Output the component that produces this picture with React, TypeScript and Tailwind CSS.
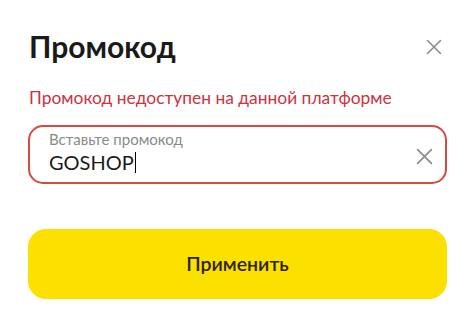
import React from 'react';

const CloseIcon: React.FC<{ size: number; className?: string }> = ({ size, className }) => (
  <svg width={size} height={size} viewBox="0 0 16 16" fill="none" className={className}>
    <path d="M1.5 1.5L14.5 14.5M14.5 1.5L1.5 14.5" stroke="currentColor" strokeWidth="1.6" strokeLinecap="round" />
  </svg>
);

export default function App() {
  return (
    <div className="w-[471px] h-[321px] bg-white px-[28px] pt-[28px] font-['Lato','Noto_Sans',sans-serif]">
      {/* Header */}
      <div className="flex items-center justify-between">
        <h1 className="text-[30px] leading-[36px] font-bold text-[#1a1a1a] pl-px">Промокод</h1>
        <button className="text-[#8c8c8c] mr-[1px] mt-[2px]">
          <CloseIcon size={16} />
        </button>
      </div>

      {/* Error */}
      <p className="mt-[24px] text-[17.4px] leading-[20px] text-[#cc3341] pl-px">
        Промокод недоступен на данной платформе
      </p>

      {/* Input */}
      <div className="mt-[17px] h-[59px] w-[419px] rounded-[15px] border-2 border-[#d9493f] flex items-start pl-[19px] pr-[12px] pt-[3px]">
        <div className="flex-1 flex flex-col">
          <span className="text-[15px] leading-[18px] text-[#8a8a8a]">Вставьте промокод</span>
          <span className="mt-[2px] text-[20px] leading-[24px] text-[#1a1a1a] flex items-center">
            GOSHOP<span className="inline-block w-px h-[21px] bg-black ml-px" />
          </span>
        </div>
        <button className="text-[#8c8c8c] mt-[18px]">
          <CloseIcon size={17} />
        </button>
      </div>

      {/* Submit */}
      <button className="mt-[45px] h-[70px] w-[419px] rounded-[18px] bg-[#fbe000] text-[19.5px] font-semibold text-[#2a2300]">
        Применить
      </button>
    </div>
  );
}
